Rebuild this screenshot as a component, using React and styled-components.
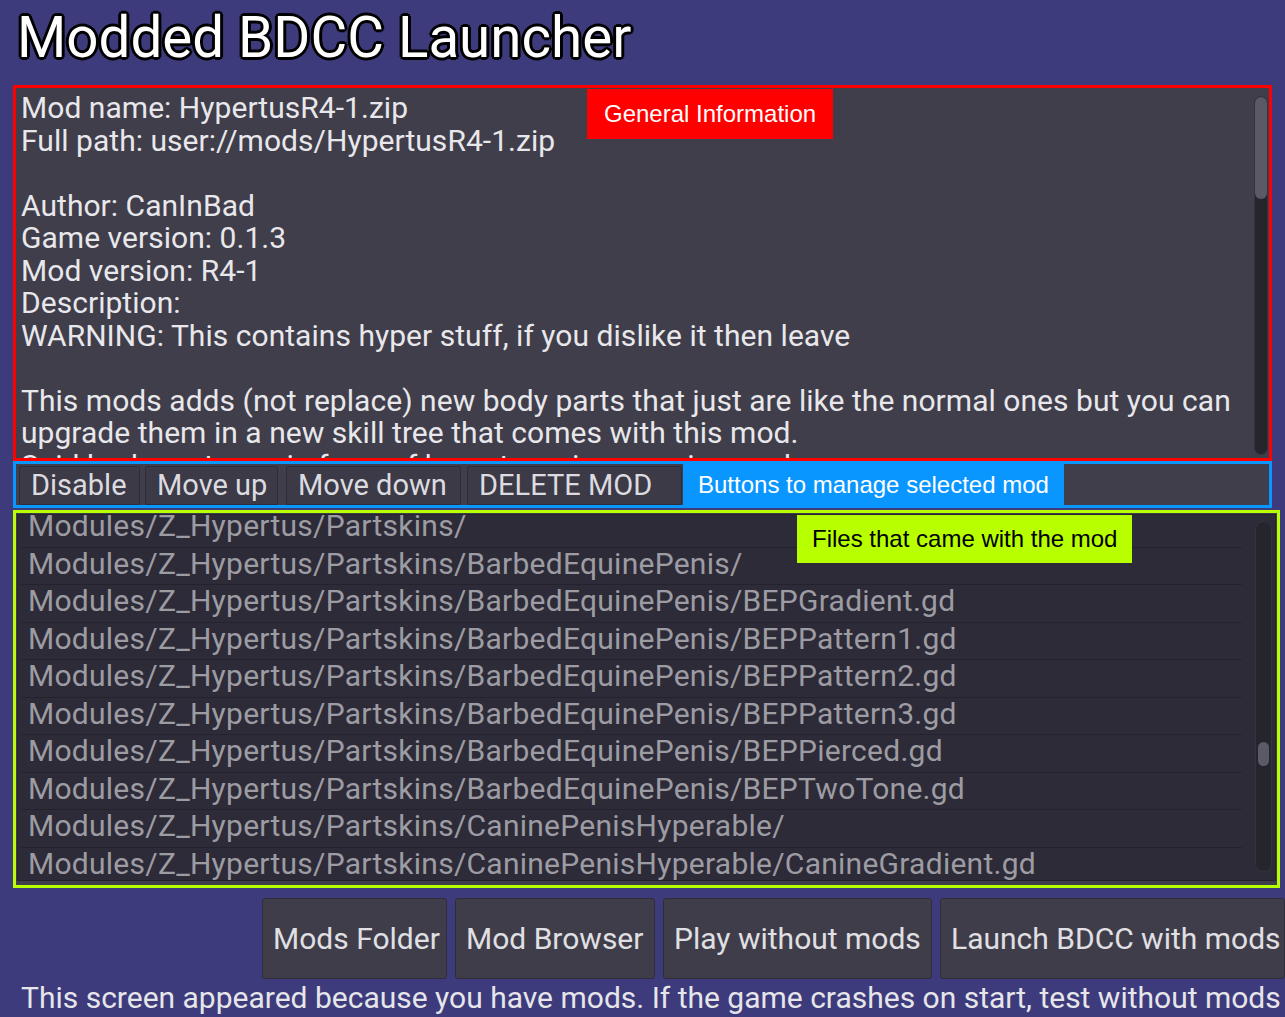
import React from "react";
import styled, { createGlobalStyle } from "styled-components";

const GlobalStyle = createGlobalStyle`
  html, body {
    margin: 0;
    padding: 0;
    background: #3d3b7b;
    overflow: hidden;
  }
  * {
    box-sizing: border-box;
  }
`;

const infoLines = [
  "Mod name: HypertusR4-1.zip",
  "Full path: user://mods/HypertusR4-1.zip",
  "",
  "Author: CanInBad",
  "Game version: 0.1.3",
  "Mod version: R4-1",
  "Description:",
  "WARNING: This contains hyper stuff, if you dislike it then leave",
  "",
  "This mods adds (not replace) new body parts that just are like the normal ones but you can",
  "upgrade them in a new skill tree that comes with this mod.",
  "Said body parts are in form of breast, penises, vagina, and anus.",
];

const base = "Modules/Z_Hypertus/Partskins/";
const files = [
  base,
  base + "BarbedEquinePenis/",
  base + "BarbedEquinePenis/BEPGradient.gd",
  base + "BarbedEquinePenis/BEPPattern1.gd",
  base + "BarbedEquinePenis/BEPPattern2.gd",
  base + "BarbedEquinePenis/BEPPattern3.gd",
  base + "BarbedEquinePenis/BEPPierced.gd",
  base + "BarbedEquinePenis/BEPTwoTone.gd",
  base + "CaninePenisHyperable/",
  base + "CaninePenisHyperable/CanineGradient.gd",
];

// widths and gaps read off the launcher so the row lines up
const actions = [
  { label: "Disable", width: 121, gap: 5 },
  { label: "Move up", width: 133, gap: 8 },
  { label: "Move down", width: 175, gap: 6 },
  { label: "DELETE MOD", width: 215, gap: 1 },
];

const launchButtons = [
  { label: "Mods Folder", width: 185 },
  { label: "Mod Browser", width: 200 },
  { label: "Play without mods", width: 269 },
  { label: "Launch BDCC with mods", width: 345 },
];

const Page = styled.div`
  width: 1285px;
  height: 1017px;
  padding-left: 13px;
  display: flex;
  flex-direction: column;
  font-family: Roboto, "Liberation Sans", sans-serif;
  color: #e6e6ea;
  overflow: hidden;
`;

const Title = styled.h1`
  margin: 0 0 0 4px;
  height: 85px;
  padding-top: 10px;
  font-size: 56.5px;
  line-height: 57px;
  font-weight: 400;
  color: #fff;
  white-space: nowrap;
  text-shadow: -2px -2px 0 #000, 2px -2px 0 #000, -2px 2px 0 #000,
    2px 2px 0 #000, 0 -3px 0 #000, 0 3px 0 #000, -3px 0 0 #000, 3px 0 0 #000;
`;

const Marked = styled.section`
  position: relative;
  width: ${(p) => p.$width}px;
  height: ${(p) => p.$height}px;
  border: 3px solid ${(p) => p.$color};
  background: #403e4a;
  margin-top: ${(p) => p.$top || 0}px;
`;

const Note = styled.div`
  position: absolute;
  left: ${(p) => p.$left}px;
  top: ${(p) => p.$top}px;
  height: ${(p) => p.$height}px;
  padding: 0 ${(p) => p.$pad}px;
  display: flex;
  align-items: center;
  background: ${(p) => p.$bg};
  color: ${(p) => p.$fg};
  font-family: "Liberation Sans", Arial, sans-serif;
  font-size: 24px;
  white-space: nowrap;
  z-index: 2;
`;

const InlineNote = styled(Note)`
  position: static;
  flex-shrink: 0;
`;

const InfoBody = styled.div`
  display: flex;
  height: 100%;
`;

const InfoText = styled.div`
  flex: 1;
  padding: 4px 0 0 5px;
  overflow: hidden;
  font-size: 30px;
  line-height: 32.5px;
  letter-spacing: 0.04px;
  color: #e8e8ec;
`;

const InfoLine = styled.div`
  height: 32.5px;
  white-space: nowrap;
`;

const Track = styled.div`
  position: relative;
  flex-shrink: 0;
  width: ${(p) => p.$width}px;
  margin: ${(p) => p.$margin};
  background: #26252e;
  border: 1px solid #34323f;
  border-radius: 8px;
`;

const Thumb = styled.div`
  position: absolute;
  left: ${(p) => p.$inset}px;
  right: ${(p) => p.$inset}px;
  background: #5b5966;
  border-radius: 6px;
`;

const ActionRow = styled.div`
  display: flex;
  align-items: flex-start;
  height: 100%;
  padding-left: 3px;
  overflow: hidden;
`;

const ActionButton = styled.button`
  flex-shrink: 0;
  width: ${(p) => p.$width}px;
  height: 39px;
  margin: 2px ${(p) => p.$gap}px 0 0;
  padding: 0 0 0 11px;
  text-align: left;
  background: #3c3a47;
  border: 1px solid #2e2c38;
  border-radius: 2px;
  color: #dcdce0;
  font-family: Roboto, "Liberation Sans", sans-serif;
  font-size: 29px;
  line-height: 37px;
  white-space: nowrap;
`;

const FilePanel = styled.div`
  display: flex;
  margin: 1px 1px 4px 1px;
  height: calc(100% - 5px);
  background: #2d2b38;
  border: 1px solid #25232e;
  overflow: hidden;
`;

const FileList = styled.div`
  flex: 1;
  margin: -5px 0 0 3px;
  padding-right: 13px;
`;

const FileRow = styled.div`
  height: 37.5px;
  padding: 0 0 0 7px;
  border-bottom: 1px solid #24222d;
  font-size: 30px;
  line-height: 31px;
  letter-spacing: 0.26px;
  color: #9d9ca3;
  white-space: nowrap;
`;

const ButtonRow = styled.div`
  display: flex;
  justify-content: flex-end;
  gap: 8px;
  margin-top: 10px;
  height: 81px;
`;

const LaunchButton = styled.button`
  flex-shrink: 0;
  width: ${(p) => p.$width}px;
  height: 81px;
  padding: 0 0 0 10px;
  text-align: left;
  background: #3f3d4a;
  border: 1px solid #2f2d3a;
  border-radius: 3px;
  color: #e0e0e4;
  font-family: Roboto, "Liberation Sans", sans-serif;
  font-size: 30px;
  white-space: nowrap;
`;

const Footer = styled.div`
  margin-top: 1px;
  padding-left: 8px;
  font-size: 30px;
  line-height: 36px;
  color: #e6e6ea;
  white-space: nowrap;
`;

const App = () => {
  return (
    <Page>
      <GlobalStyle />
      <Title>Modded BDCC Launcher</Title>

      <Marked $width={1259} $height={376} $color="#ff0000">
        <Note $left={571} $top={1} $height={50} $pad={17} $bg="#ff0000" $fg="#fff">
          General Information
        </Note>
        <InfoBody>
          <InfoText>
            {infoLines.map((line, i) => (
              <InfoLine key={i}>{line}</InfoLine>
            ))}
          </InfoText>
          <Track $width={14} $margin="8px 1px 3px 0">
            <Thumb $inset={0} style={{ top: 0, height: 102 }} />
          </Track>
        </InfoBody>
      </Marked>

      <Marked $width={1259} $height={47} $color="#0a96ff">
        <ActionRow>
          {actions.map((a) => (
            <ActionButton key={a.label} $width={a.width} $gap={a.gap}>
              {a.label}
            </ActionButton>
          ))}
          <InlineNote $height={41} $pad={15} $bg="#0a96ff" $fg="#fff">
            Buttons to manage selected mod
          </InlineNote>
        </ActionRow>
      </Marked>

      <Marked $width={1267} $height={378} $color="#b8ff00" $top={2}>
        <Note $left={781} $top={2} $height={48} $pad={15} $bg="#b8ff00" $fg="#000">
          Files that came with the mod
        </Note>
        <FilePanel>
          <FileList>
            {files.map((f) => (
              <FileRow key={f}>{f}</FileRow>
            ))}
          </FileList>
          <Track $width={17} $margin="6px 3px 8px 0">
            <Thumb $inset={2} style={{ top: 220, height: 24 }} />
          </Track>
        </FilePanel>
      </Marked>

      <ButtonRow>
        {launchButtons.map((b) => (
          <LaunchButton key={b.label} $width={b.width}>
            {b.label}
          </LaunchButton>
        ))}
      </ButtonRow>

      <Footer>
        This screen appeared because you have mods. If the game crashes on start, test without mods
      </Footer>
    </Page>
  );
};

export default App;
